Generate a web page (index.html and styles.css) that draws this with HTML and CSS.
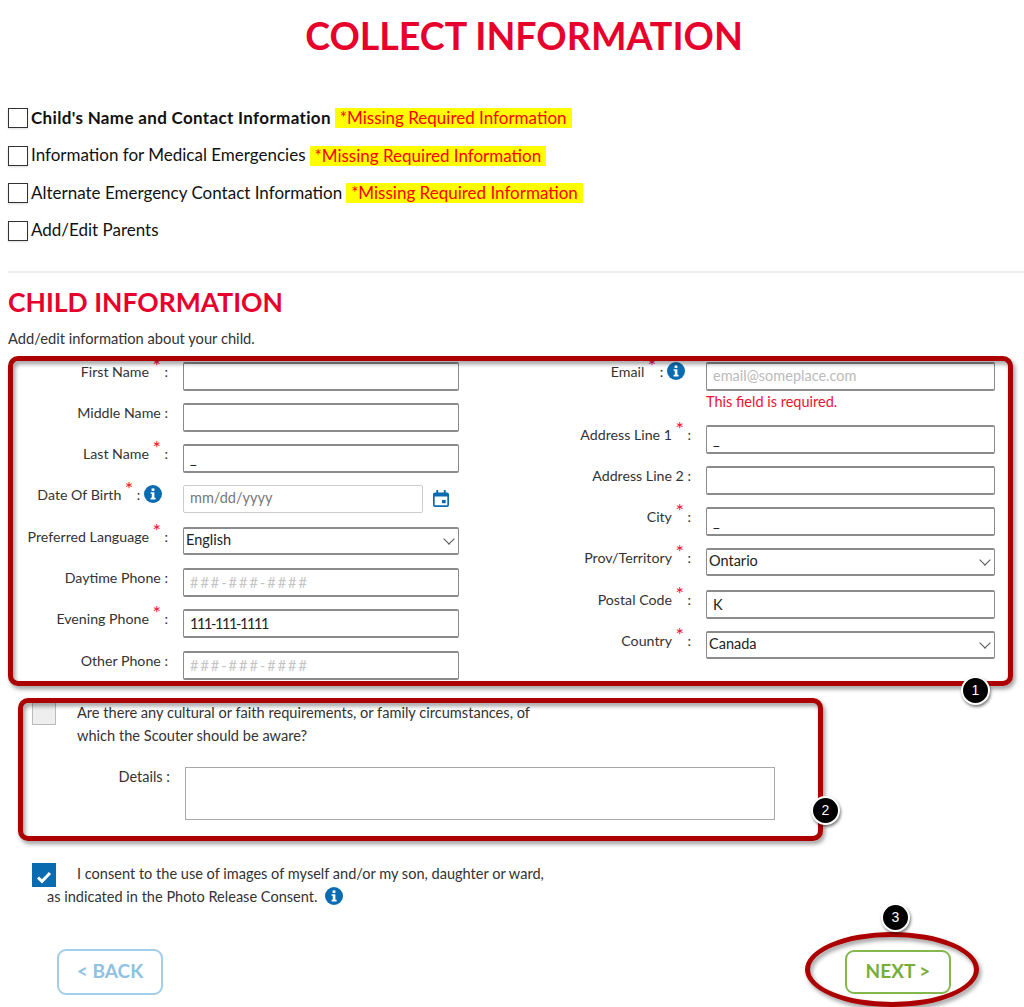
FILE: index.html
```html
<!DOCTYPE html>
<html lang="en">
<head>
    <meta charset="UTF-8">
    <meta name="viewport" content="width=device-width, initial-scale=1.0">
    <title>Collect Information</title>
    <link rel="stylesheet" href="styles.css">
</head>
<body>
    <svg class="icon-defs" width="0" height="0">
        <symbol id="info" viewBox="0 0 18 18">
            <circle cx="9" cy="9" r="9" fill="#0a6cb0"/>
            <rect x="7.6" y="3.4" width="2.8" height="2.6" fill="#fff"/>
            <path d="M6.6 7.2h3.8v5.6h1.2v1.6H6.6v-1.6h1.2V8.8H6.6z" fill="#fff"/>
        </symbol>
        <symbol id="calendar" viewBox="0 0 17 18">
            <path d="M2 2.5h13a2 2 0 0 1 2 2V16a2 2 0 0 1-2 2H2a2 2 0 0 1-2-2V4.500a2 2 0 0 1 2-2zM1.800 7v9.200h13.400V7z" fill="#0a6cb0" fill-rule="evenodd"/>
            <rect x="3.500" y="0" width="2" height="4" fill="#0a6cb0"/>
            <rect x="11.500" y="0" width="2" height="4" fill="#0a6cb0"/>
            <rect x="9.500" y="10.500" width="4" height="3.500" fill="#0a6cb0"/>
        </symbol>
    </svg>

    <div class="page">
        <h1 class="page-title">COLLECT INFORMATION</h1>

        <ul class="steps">
            <li class="step step-current"><span class="step-box"></span><span class="step-name">Child's Name and Contact Information</span><span class="missing">*Missing Required Information</span></li>
            <li class="step"><span class="step-box"></span><span class="step-name">Information for Medical Emergencies</span><span class="missing">*Missing Required Information</span></li>
            <li class="step"><span class="step-box"></span><span class="step-name">Alternate Emergency Contact Information</span><span class="missing">*Missing Required Information</span></li>
            <li class="step"><span class="step-box"></span><span class="step-name">Add/Edit Parents</span></li>
        </ul>

        <hr class="divider">

        <h2 class="section-title">CHILD INFORMATION</h2>
        <p class="section-intro">Add/edit information about your child.</p>

        <div class="form-columns">
            <div class="form-col form-col-left">
                <div class="field">
                    <label class="field-label">First Name<span class="req">*</span>:</label>
                    <input class="text-input" type="text">
                </div>
                <div class="field">
                    <label class="field-label">Middle Name :</label>
                    <input class="text-input" type="text">
                </div>
                <div class="field">
                    <label class="field-label">Last Name<span class="req">*</span>:</label>
                    <input class="text-input" type="text" value="_">
                </div>
                <div class="field">
                    <label class="field-label label-with-info">Date Of Birth<span class="req">*</span>: <svg class="info-icon"><use href="#info"/></svg></label>
                    <input class="text-input date-input" type="text" placeholder="mm/dd/yyyy">
                    <svg class="calendar-icon"><use href="#calendar"/></svg>
                </div>
                <div class="field">
                    <label class="field-label">Preferred Language<span class="req">*</span>:</label>
                    <div class="select-wrap"><select class="select-input"><option>English</option></select></div>
                </div>
                <div class="field">
                    <label class="field-label">Daytime Phone :</label>
                    <input class="text-input phone-input" type="text" placeholder="###-###-####">
                </div>
                <div class="field">
                    <label class="field-label">Evening Phone<span class="req">*</span>:</label>
                    <input class="text-input phone-value" type="text" value="111-111-1111">
                </div>
                <div class="field">
                    <label class="field-label">Other Phone :</label>
                    <input class="text-input phone-input" type="text" placeholder="###-###-####">
                </div>
            </div>

            <div class="form-col form-col-right">
                <div class="field field-email">
                    <label class="field-label label-with-info">Email<span class="req">*</span>: <svg class="info-icon"><use href="#info"/></svg></label>
                    <div class="field-stack">
                        <input class="text-input email-input" type="text" placeholder="email@someplace.com">
                        <div class="field-error">This field is required.</div>
                    </div>
                </div>
                <div class="field">
                    <label class="field-label">Address Line 1<span class="req">*</span>:</label>
                    <input class="text-input" type="text" value="_">
                </div>
                <div class="field">
                    <label class="field-label">Address Line 2 :</label>
                    <input class="text-input" type="text">
                </div>
                <div class="field">
                    <label class="field-label">City<span class="req">*</span>:</label>
                    <input class="text-input" type="text" value="_">
                </div>
                <div class="field">
                    <label class="field-label">Prov/Territory<span class="req">*</span>:</label>
                    <div class="select-wrap"><select class="select-input"><option>Ontario</option></select></div>
                </div>
                <div class="field">
                    <label class="field-label">Postal Code<span class="req">*</span>:</label>
                    <input class="text-input" type="text" value="K">
                </div>
                <div class="field">
                    <label class="field-label">Country<span class="req">*</span>:</label>
                    <div class="select-wrap"><select class="select-input"><option>Canada</option></select></div>
                </div>
            </div>
        </div>

        <div class="faith-block">
            <span class="check-box check-disabled"></span>
            <p class="faith-text">Are there any cultural or faith requirements, or family circumstances, of<br>which the Scouter should be aware?</p>
        </div>
        <div class="details-row">
            <label class="details-label">Details :</label>
            <textarea class="details-input"></textarea>
        </div>

        <div class="consent">
            <div class="consent-first">
                <span class="check-box check-on">
                    <svg width="16" height="14" viewBox="0 0 16 14"><path d="M2 7.500l4 3.800 8-8.300" fill="none" stroke="#fff" stroke-width="3"/></svg>
                </span>
                <span>I consent to the use of images of myself and/or my son, daughter or ward,</span>
            </div>
            <div class="consent-second">as indicated in the Photo Release Consent. <svg class="info-icon consent-info"><use href="#info"/></svg></div>
        </div>

        <div class="nav-buttons">
            <button class="nav-btn btn-back">&lt; BACK</button>
            <button class="nav-btn btn-next">NEXT &gt;</button>
        </div>
    </div>

    <!-- annotations drawn over the screenshot -->
    <div class="mark mark-form"></div>
    <div class="mark mark-faith"></div>
    <div class="mark mark-next"></div>
    <div class="badge badge-1">1</div>
    <div class="badge badge-2">2</div>
    <div class="badge badge-3">3</div>
</body>
</html>
```

FILE: styles.css
```css
* {
    box-sizing: border-box;
}
html, body {
    margin: 0;
    padding: 0;
    height: 1007px;
    overflow: hidden;
}
body {
    font-family: "Lato", "Open Sans", sans-serif;
    color: #222;
    background-color: white;
    position: relative;
}
.icon-defs {
    position: absolute;
}
.page {
    padding-left: 8px;
}
.page-title {
    margin: 0;
    padding-top: 15px;
    padding-left: 16px;
    height: 98.5px;
    font-size: 37.6px;
    line-height: 42px;
    font-weight: 700;
    color: #e8002d;
    text-align: center;
}
.steps {
    list-style-type: none;
    margin: 0;
    padding: 0;
}
.step {
    display: flex;
    align-items: center;
    height: 37.5px;
    font-size: 17px;
    color: #111;
}
.step-current .step-name {
    font-weight: 700;
    letter-spacing: 0.33px;
}
.step-box {
    width: 20px;
    height: 20px;
    margin-top: 2px;
    margin-right: 3px;
    border: 1.5px solid #333;
    box-shadow: 0 1px 2px rgba(0, 0, 0, 0.15);
}
.missing {
    margin-top: 2px;
    margin-left: 4px;
    padding: 0 5px;
    line-height: 20px;
    color: #f00;
    background-color: #ff0;
}
.divider {
    margin: 22px 0 0;
    border: none;
    border-top: 2px solid #ececec;
}
.section-title {
    margin: 14px 0 0;
    font-size: 26.5px;
    line-height: 31px;
    font-weight: 700;
    color: #e8002d;
}
.section-intro {
    margin: 10px 0 0;
    font-size: 14.7px;
    line-height: 20px;
    color: #333;
}
.form-columns {
    display: flex;
    margin-top: 14px;
}
.form-col-left {
    width: 451px;
}
.form-col-right {
    width: 536px;
}
.field {
    display: flex;
    height: 41.3px;
    font-size: 14.2px;
}
.field-label {
    flex: 0 0 160px;
    margin-right: 15px;
    line-height: 20px;
    text-align: right;
    color: #333;
    white-space: nowrap;
}
.form-col-right .field-label {
    flex: 0 0 232px;
}
.field-label.label-with-info {
    padding-right: 6px;
}
.req {
    position: relative;
    top: -4px;
    margin: 0 3.5px;
    color: #f01030;
    font-size: 20px;
    line-height: 14px;
}
.text-input {
    display: block;
    width: 100%;
    height: 29px;
    padding: 0 6px;
    font-family: inherit;
    font-size: 14.5px;
    color: #222;
    background-color: white;
    border: 2px solid #8b8b8b;
    border-left-width: 1.5px;
    border-right-width: 1.5px;
    border-radius: 2px;
    outline: none;
}
.text-input::placeholder {
    color: #bbb;
}
.field > .text-input {
    flex: 0 0 276px;
    width: 276px;
}
.form-col-right .field > .text-input,
.form-col-right .select-wrap {
    flex: 0 0 289px;
    width: 289px;
}
.field > .date-input {
    flex: 0 0 240px;
    width: 240px;
    height: 28px;
    padding-bottom: 3px;
    border: 1.5px solid #ccc;
}
.email-input {
    padding-bottom: 2px;
}
.date-input::placeholder {
    color: #777;
}
.phone-input::placeholder {
    letter-spacing: 2px;
    color: #c4c4c4;
}
.phone-value {
    letter-spacing: -1.4px;
}
.calendar-icon {
    width: 16px;
    height: 17px;
    margin: 5px 0 0 10px;
}
.info-icon {
    width: 18px;
    height: 18px;
    margin: -4px 0;
    vertical-align: 1px;
}
.consent-info {
    margin-left: 4px;
}
.select-wrap {
    position: relative;
    flex: 0 0 276px;
    width: 276px;
    height: 28px;
}
.select-wrap::after {
    content: "";
    position: absolute;
    right: 6px;
    top: 8px;
    width: 7px;
    height: 7px;
    border-right: 1px solid #555;
    border-bottom: 1px solid #555;
    transform: rotate(45deg);
    pointer-events: none;
}
.select-input {
    display: block;
    width: 100%;
    height: 28px;
    padding: 0 2px 3px;
    font-family: inherit;
    font-size: 14.5px;
    color: #222;
    background-color: white;
    border: 2px solid #8b8b8b;
    border-left-width: 1.5px;
    border-right-width: 1.5px;
    border-radius: 2px;
    appearance: none;
    outline: none;
}
.field-email {
    height: 63px;
}
.field-stack {
    flex: 0 0 289px;
}
.field-error {
    margin-top: 1px;
    font-size: 14.5px;
    line-height: 20px;
    color: #f01030;
}
.faith-block {
    display: flex;
    margin: 9.5px 0 0 24px;
    height: 66px;
}
.check-box {
    display: flex;
    flex: 0 0 24px;
    width: 24px;
    height: 24px;
    align-items: center;
    justify-content: center;
}
.check-disabled {
    background-color: #eee;
    border: 1px solid #bbb;
}
.check-on {
    margin-top: 1px;
    padding-top: 3px;
    background-color: #0a6cb0;
}
.faith-text {
    margin: 0 0 0 21px;
    font-size: 14.6px;
    line-height: 23px;
    color: #333;
}
.details-row {
    display: flex;
    height: 53px;
}
.details-label {
    flex: 0 0 162px;
    margin-right: 15px;
    text-align: right;
    font-size: 14.5px;
    line-height: 20px;
    color: #333;
}
.details-input {
    width: 590px;
    height: 53px;
    border: 1.5px solid #aaa;
    resize: none;
    outline: none;
}
.consent {
    margin: 42px 0 0 24px;
    font-size: 14.55px;
    line-height: 23px;
    color: #333;
}
.consent-first {
    display: flex;
    gap: 21px;
    height: 23px;
}
.consent-second {
    padding-left: 15px;
}
.nav-buttons {
    display: flex;
    justify-content: space-between;
    align-items: center;
    margin-top: 41px;
    padding: 0 73px 0 49px;
}
.nav-btn {
    width: 106px;
    height: 46px;
    padding: 0 0 3px;
    font-family: inherit;
    font-size: 19px;
    font-weight: 700;
    background-color: white;
    border-radius: 9px;
    cursor: pointer;
}
.btn-back {
    color: #8fc2e2;
    border: 2px solid #a3cde8;
}
.btn-next {
    height: 44px;
    color: #78ad3a;
    border: 2px solid #84b84f;
}
/* red callouts sit on top of the form */
.mark {
    position: absolute;
    border: 5px solid #ad0000;
    border-radius: 10px;
    filter: drop-shadow(2px 3px 2px rgba(0, 0, 0, 0.4));
    pointer-events: none;
}
.mark-form {
    left: 8px;
    top: 356px;
    width: 1005px;
    height: 330px;
}
.mark-faith {
    left: 18px;
    top: 698px;
    width: 805px;
    height: 143px;
}
.mark-next {
    left: 805px;
    top: 932px;
    width: 174px;
    height: 75px;
    border-radius: 50%;
}
.badge {
    position: absolute;
    width: 29px;
    height: 29px;
    border: 2px solid white;
    border-radius: 50%;
    background-color: black;
    color: white;
    font-family: "Liberation Sans", sans-serif;
    font-size: 14px;
    line-height: 25px;
    text-align: center;
    box-shadow: 1px 2px 3px rgba(0, 0, 0, 0.5);
}
.badge-1 {
    left: 961px;
    top: 676px;
}
.badge-2 {
    left: 811px;
    top: 796px;
}
.badge-3 {
    left: 881px;
    top: 903px;
}
```
